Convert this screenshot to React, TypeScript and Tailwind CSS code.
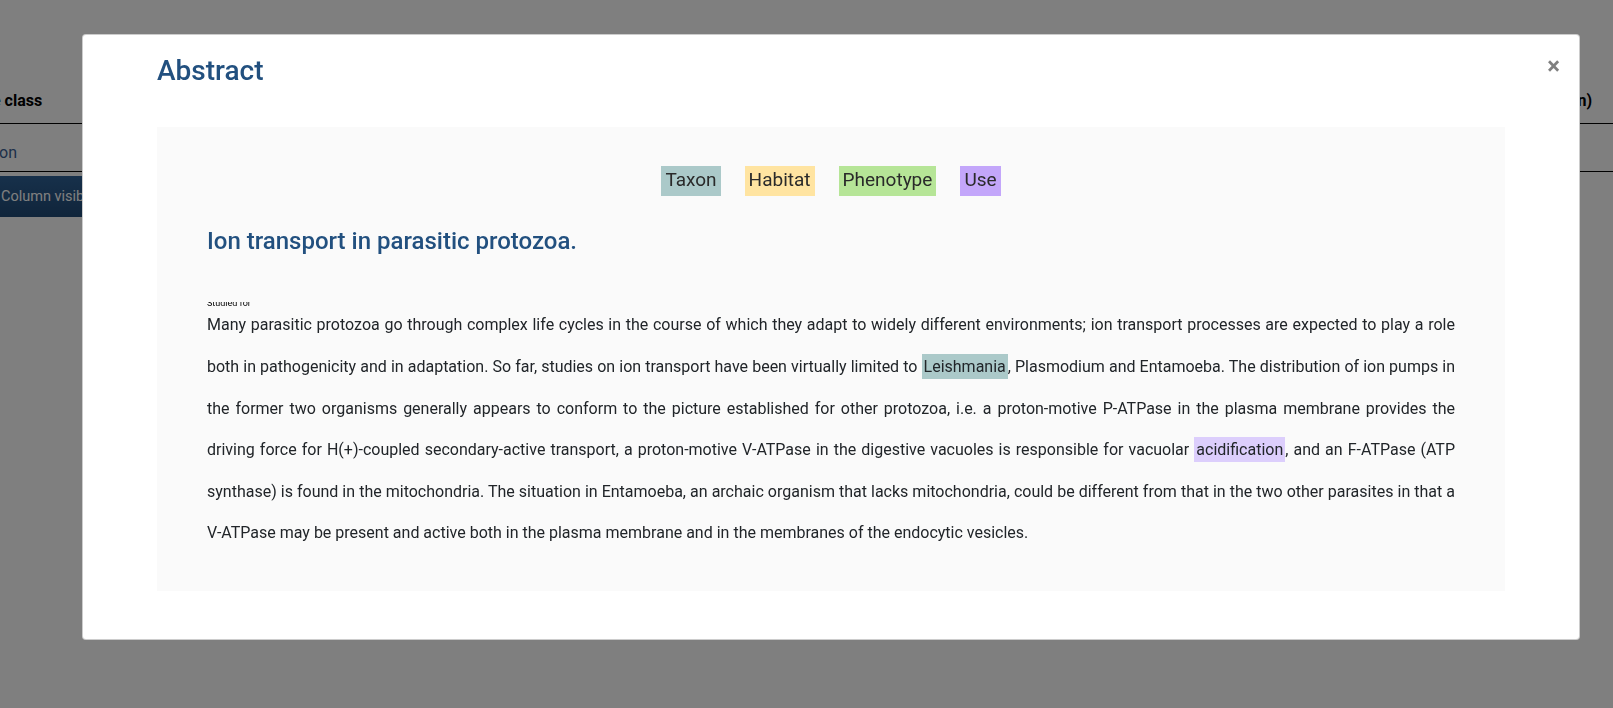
import React from "react";

const font = { fontFamily: "Roboto, 'Noto Sans', Arial, sans-serif" };

function Tag({ label, cls }: { label: string; cls: string }) {
  return (
    <span className={`inline-flex h-[30px] items-center px-[4px] text-[19px] text-[#2a2a2a] ${cls}`}>
      {label}
    </span>
  );
}

export default function App() {
  return (
    <div className="relative h-[708px] w-full overflow-hidden bg-white" style={font}>
      {/* underlying page */}
      <div className="flex flex-col pt-[79px]">
        <div className="flex h-[45px] items-center justify-between border-b border-black pr-[21px] text-[16px] font-bold text-black">
          <span className="ml-[-8px]">e class</span>
          <span>(min)</span>
        </div>
        <div className="flex h-[48px] items-center border-b border-black pt-[10px] text-[16px] text-[#3a5f94]">
          <span className="ml-[-1px]">on</span>
        </div>
        <div className="mt-[4px] flex h-[41px] w-[140px] items-center rounded-r bg-gradient-to-b from-[#2e6196] to-[#204a76] pl-[1px] text-[14.5px] text-white">
          Column visibility
        </div>
      </div>

      {/* modal overlay */}
      <div className="fixed inset-0 bg-black/50">
        <div className="relative ml-[82px] mt-[34px] h-[606px] w-[1498px] rounded-[4px] border border-black/20 bg-white">
          <button className="absolute right-[19px] top-[19px] text-[24px] font-bold leading-none text-black/50">
            ×
          </button>
          <div className="px-[74px] pt-[19px]">
            <h2 className="text-[28px] font-medium leading-[1.2] text-[#22507f]">Abstract</h2>
            <div className="mt-[39px] bg-[#fafafa] px-[50px] pb-[37px] pt-[39px]">
              <div className="flex justify-center gap-[24px]">
                <Tag label="Taxon" cls="bg-[#abc9c9]" />
                <Tag label="Habitat" cls="bg-[#ffe4a1]" />
                <Tag label="Phenotype" cls="bg-[#b6e597]" />
                <Tag label="Use" cls="bg-[#c3a6fa]" />
              </div>
              <h3 className="mt-[31px] text-[24px] font-medium leading-[1.2] text-[#22507f]">
                Ion transport in parasitic protozoa.
              </h3>
              <div className="mt-[47px] h-[5px] overflow-hidden">
                <div className="mt-[-3px] text-[9px] leading-[9px] text-black">Studied for</div>
              </div>
              <p className="mt-[-3px] text-justify text-[16px] leading-[41.6px] text-[#212529]">
                Many parasitic protozoa go through complex life cycles in the course of which they adapt to widely
                different environments; ion transport processes are expected to play a role both in pathogenicity
                and in adaptation. So far, studies on ion transport have been virtually limited to{" "}
                <span className="bg-[#abc9c9] px-[2px] py-[3px]">Leishmania</span>, Plasmodium and Entamoeba. The
                distribution of ion pumps in the former two organisms generally appears to conform to the picture
                established for other protozoa, i.e. a proton-motive P-ATPase in the plasma membrane provides the
                driving force for H(+)-coupled secondary-active transport, a proton-motive V-ATPase in the digestive
                vacuoles is responsible for vacuolar{" "}
                <span className="bg-[#dccefc] px-[2px] py-[3px]">acidification</span>, and an F-ATPase (ATP
                synthase) is found in the mitochondria. The situation in Entamoeba, an archaic organism that lacks
                mitochondria, could be different from that in the two other parasites in that a V-ATPase may be
                present and active both in the plasma membrane and in the membranes of the endocytic vesicles.
              </p>
            </div>
          </div>
        </div>
      </div>
    </div>
  );
}
